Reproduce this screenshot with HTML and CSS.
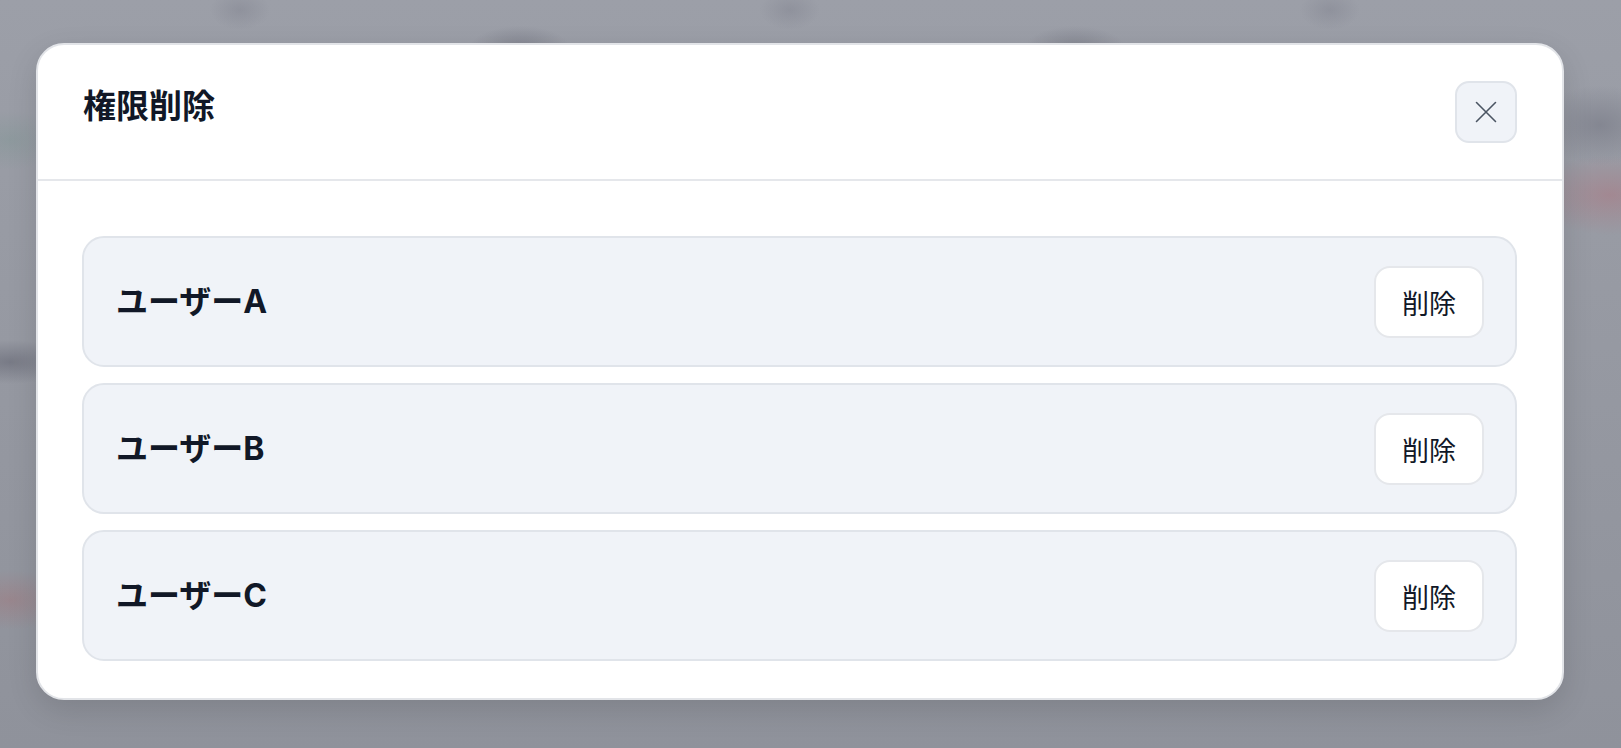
FILE: index.html
```html
<!DOCTYPE html>
<html lang="ja">
<head>
<meta charset="utf-8">
<title>権限削除</title>
<link rel="stylesheet" href="styles.css">
</head>
<body>
<div class="backdrop">
  <div class="modal">
    <div class="modal-header">
      <h2 class="modal-title">権限削除</h2>
      <button class="close-btn" aria-label="閉じる">
        <svg width="22" height="22" viewBox="0 0 22 22" fill="none" stroke="#4b5563" stroke-width="1.6" stroke-linecap="round"><path d="M1.5 1.5 L20.5 20.5 M20.5 1.5 L1.5 20.5"/></svg>
      </button>
    </div>
    <div class="modal-body">
      <div class="user-row">
        <span class="user-name">ユーザーA</span>
        <button class="delete-btn">削除</button>
      </div>
      <div class="user-row">
        <span class="user-name">ユーザーB</span>
        <button class="delete-btn">削除</button>
      </div>
      <div class="user-row">
        <span class="user-name">ユーザーC</span>
        <button class="delete-btn">削除</button>
      </div>
    </div>
  </div>
</div>
</body>
</html>
```
FILE: styles.css
```css
* { box-sizing: border-box; }
html, body {
  margin: 0;
  padding: 0;
  width: 1621px;
  height: 748px;
  overflow: hidden;
}
body {
  font-family: "Inter", "Noto Sans CJK JP", sans-serif;
  color: #111827;
  background:
    radial-gradient(ellipse 50px 22px at 520px 48px, rgba(110,112,125,0.55), transparent),
    radial-gradient(ellipse 50px 22px at 1075px 48px, rgba(110,112,125,0.5), transparent),
    radial-gradient(ellipse 30px 20px at 240px 10px, rgba(120,122,135,0.35), transparent),
    radial-gradient(ellipse 30px 20px at 790px 10px, rgba(120,122,135,0.35), transparent),
    radial-gradient(ellipse 30px 20px at 1330px 10px, rgba(120,122,135,0.35), transparent),
    radial-gradient(ellipse 60px 40px at 1600px 125px, rgba(110,112,125,0.5), transparent),
    radial-gradient(ellipse 80px 40px at 1610px 195px, rgba(170,120,130,0.55), transparent),
    radial-gradient(ellipse 50px 30px at 10px 140px, rgba(130,150,150,0.5), transparent),
    radial-gradient(ellipse 60px 22px at 10px 362px, rgba(100,102,115,0.6), transparent),
    radial-gradient(ellipse 60px 30px at 10px 600px, rgba(160,120,125,0.5), transparent),
    linear-gradient(#9c9fa8, #8f929b);
}
.backdrop {
  padding: 43px 0 0 36px;
  display: flex;
  align-items: flex-start;
}
.modal {
  width: 1528px;
  background: #ffffff;
  border: 2px solid #e2e4e8;
  border-radius: 28px;
  box-shadow: 0 10px 30px rgba(0,0,0,0.12);
  overflow: hidden;
}
.modal-header {
  display: flex;
  justify-content: space-between;
  align-items: flex-start;
  padding: 36px 45px 36px 45px;
  border-bottom: 2px solid #e5e7eb;
}
.modal-title {
  margin: 0;
  font-size: 33px;
  line-height: 50px;
  font-weight: 600;
  color: #111827;
}
.close-btn {
  width: 62px;
  height: 62px;
  border-radius: 14px;
  border: 2px solid #e0e4ea;
  background: #f0f3f8;
  display: flex;
  align-items: center;
  justify-content: center;
  padding: 0;
  cursor: pointer;
}
.modal-body {
  display: flex;
  flex-direction: column;
  gap: 16px;
  padding: 55px 45px 37px 44px;
}
.user-row {
  display: flex;
  align-items: center;
  justify-content: space-between;
  padding: 28px 31px 27px 32px;
  background: #f0f3f8;
  border: 2px solid #e0e4ea;
  border-radius: 22px;
}
.user-name {
  font-size: 32px;
  font-weight: 700;
  line-height: 40px;
  color: #111827;
}
.delete-btn {
  height: 72px;
  width: 110px;
  padding: 0;
  background: #ffffff;
  border: 2px solid #e5e7eb;
  border-radius: 16px;
  font-family: "Noto Sans CJK JP", sans-serif;
  font-size: 27px;
  font-weight: 400;
  color: #111827;
  cursor: pointer;
}
```
